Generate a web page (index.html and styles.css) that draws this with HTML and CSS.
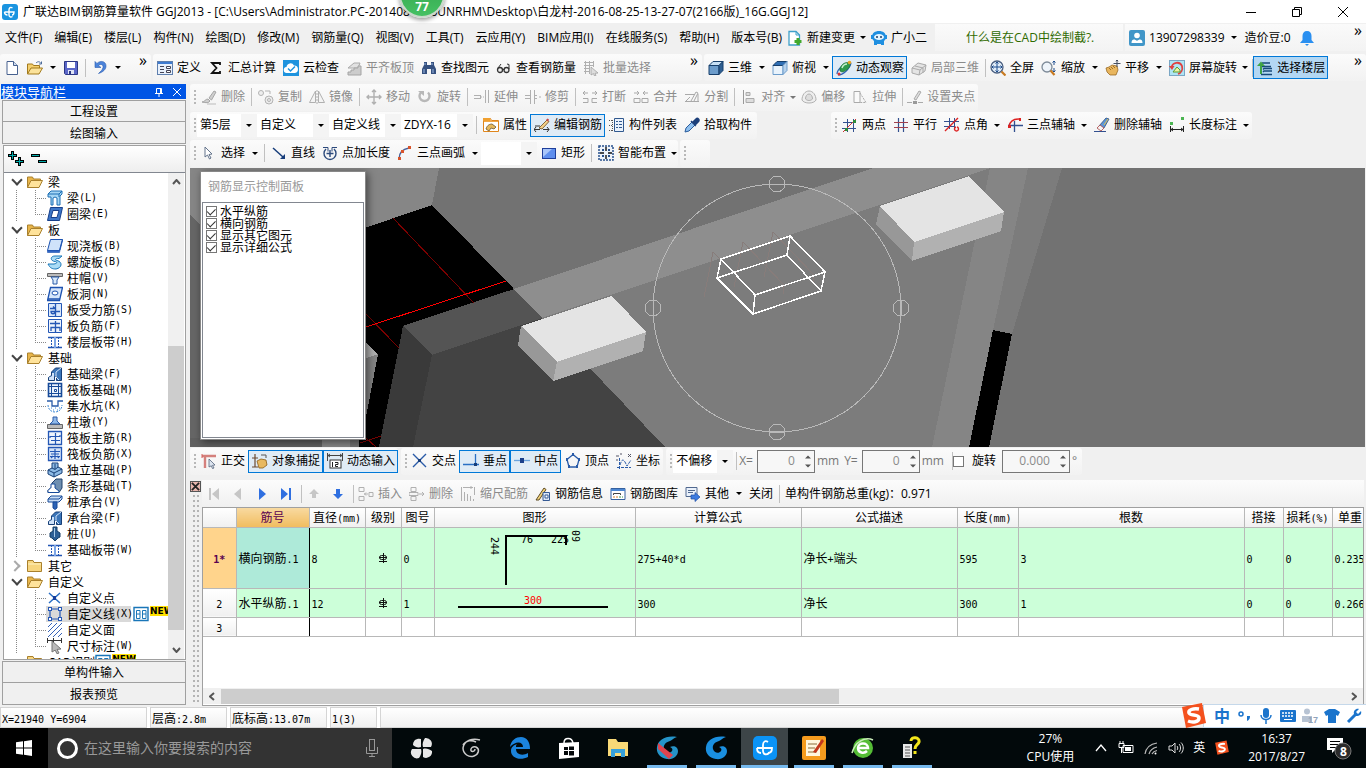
FILE: index.html
```html
<!DOCTYPE html>
<html lang="zh-CN">
<head>
    <meta charset="UTF-8">
    <meta name="viewport" content="width=device-width, initial-scale=1.0">
    <title>广联达BIM钢筋算量软件 GGJ2013</title>
    <link rel="stylesheet" href="styles.css">
</head>
<body>
    <!-- Icon sprite -->
    <svg class="sprite" aria-hidden="true">
        <symbol id="i-logo" viewBox="0 0 16 16"><rect width="16" height="16" rx="3" fill="#1a94e0"/><path d="M10.500 4c-2-1.500-3.500 0-3.500 2v5c0 2 2 2.500 3.500 1.500M2.500 8H12c0 2-1 3-2 3M2.500 8c0 2 1 3 3 3" fill="none" stroke="#fff" stroke-width="1.400"/></symbol>
        <symbol id="i-new" viewBox="0 0 16 16"><path d="M3 1.500h6.500l4 4v9H3z" fill="#fff" stroke="#47618f"/><path d="M9.500 1.500v4h4" fill="#cfdcf0" stroke="#47618f"/></symbol>
        <symbol id="i-open" viewBox="0 0 16 16"><path d="M.5 14V4h5l1 1.500h6V8" fill="#f4cf6e" stroke="#a27a1d"/><path d="M.5 14L4 8h11.500L12 14z" fill="#fbe29a" stroke="#a27a1d"/><path d="M9 3c2-2 4-1.500 5 .5m.5-2v2.500H12" fill="none" stroke="#4a6a9a"/></symbol>
        <symbol id="i-save" viewBox="0 0 16 16"><path d="M1.500 1.500h13v13h-12l-1-1z" fill="#5b67c9" stroke="#2c3784"/><path d="M4 2h8v6H4z" fill="#fff"/><path d="M5 10h6v4H5z" fill="#dfe4f5"/><path d="M6 11h2v3H6z" fill="#2c3784"/></symbol>
        <symbol id="i-undo" viewBox="0 0 16 16"><path d="M3 1.500v6h6L6.500 5.500c2-2 5-1 4.500 2-.5 2.500-2.500 4-4.500 6C11 12 14 9.500 14 6c0-5-6-6-9-2.500z" fill="#4b83da" stroke="#2a5cae" stroke-width=".6"/></symbol>
        <symbol id="i-define" viewBox="0 0 16 16"><rect x=".5" y="1.500" width="15" height="13" fill="#e8f0fb" stroke="#5e7fae"/><path d="M1 2h14v2H1z" fill="#3f7bd0"/><path d="M3 6.500h4M3 9.500h4M3 12.500h4" stroke="#445"/><path d="M9.500 6.500h4v2h-4zM9.500 10.500h4v2h-4z" fill="#fff" stroke="#445"/></symbol>
        <symbol id="i-sigma" viewBox="0 0 16 16"><path d="M12 5V3H4l4.500 5L4 13h8v-2" fill="none" stroke="#111" stroke-width="1.800"/></symbol>
        <symbol id="i-cloud" viewBox="0 0 16 16"><rect width="16" height="16" fill="#1e93de"/><path d="M4 13a3 3 0 0 1-.5-6 4 4 0 0 1 7.500-1.500 3.800 3.800 0 0 1 1 7.500z" fill="#fff"/><path d="M5 8.500l2.500 2.500L12 6.500" fill="none" stroke="#1e93de" stroke-width="1.500"/></symbol>
        <symbol id="i-align" viewBox="0 0 16 16"><path d="M2 8l6-5 6 0-2 5z" fill="#e2e2e2" stroke="#aaa"/><path d="M2 12h3v-2h3v-2h4v-2h3v9H2z" fill="#ccc" stroke="#a4a4a4"/></symbol>
        <symbol id="i-find" viewBox="0 0 16 16"><path d="M3 2h3v3h4V2h3v3l2 4v5h-5V9H6v5H1V9l2-4z" fill="#35507f"/><path d="M3 9v4M12 9v4M4 3v2M11 3v2" stroke="#9db8e4"/></symbol>
        <symbol id="i-glasses" viewBox="0 0 16 16"><circle cx="4" cy="10" r="2.500" fill="#eee" stroke="#333" stroke-width="1.300"/><circle cx="10.500" cy="10" r="2.500" fill="#eee" stroke="#333" stroke-width="1.300"/><path d="M6.500 9.500h2M13 9V4.500l-2-.5M2 8l3-4" fill="none" stroke="#333"/></symbol>
        <symbol id="i-batch" viewBox="0 0 16 16"><path d="M1 2.500h10M1 5.500h10M1 8.500h6M1 11.500h6M2.500 1v13M6.500 1v13M10.500 1v6" stroke="#b0b0b0"/><path d="M8 7l7 6-3 .3 1 2.200-1.500.5-1-2.400L8 15z" fill="#ddd" stroke="#999" stroke-width=".7"/></symbol>
        <symbol id="i-cube" viewBox="0 0 16 16"><path d="M1 5.500h10v9H1z" fill="#6c9ccb" stroke="#173f6b"/><path d="M1 5.500l4-4h10l-4 4z" fill="#c7e0f5" stroke="#173f6b"/><path d="M11 5.500l4-4v9l-4 4z" fill="#2f5f92" stroke="#173f6b"/></symbol>
        <symbol id="i-topview" viewBox="0 0 16 16"><path d="M1 5.500h10v9H1z" fill="#e9f3fc" stroke="#6c9ccb"/><path d="M1 5.500l4-4h10l-4 4z" fill="#2f6fb5" stroke="#173f6b"/><path d="M11 5.500l4-4v9l-4 4z" fill="#b7d2ec" stroke="#6c9ccb"/></symbol>
        <symbol id="i-orbit" viewBox="0 0 16 16"><path d="M1 14c0-5 9-12 14-11M2 15c5 0 12-6 13-12" fill="none" stroke="#2d63b5" stroke-width="1.200"/><path d="M4 11c-1-5 5-10 9-8 3 3-2 8-7 9z" fill="#2f9a4d" stroke="#1b6e35" stroke-width=".7"/><path d="M6 8c1-3 3-4 5-4" fill="none" stroke="#c6f0cf" stroke-width="1.500"/><circle cx="13.500" cy="2.500" r="1.800" fill="#e6a325"/><circle cx="3" cy="14" r="1.500" fill="#d33"/></symbol>
        <symbol id="i-partial" viewBox="0 0 16 16"><path d="M1 8l6-5 8 2-1 6-6 4-7-2z" fill="#e4e4e4" stroke="#aaa"/><path d="M1 8l8 2 6-5M9 10l-1 5M4 6l8 2v5" fill="none" stroke="#aaa"/></symbol>
        <symbol id="i-full" viewBox="0 0 16 16"><circle cx="7" cy="7" r="6" fill="#e3eef9" stroke="#4a5f80" stroke-width="1.300"/><path d="M7 2v10M2 7h10M5.500 3.500L7 2l1.500 1.500M5.500 10.500L7 12l1.500-1.500M3.500 5.500L2 7l1.500 1.500M10.500 5.500L12 7l-1.500 1.500" fill="none" stroke="#1d4d8e"/><path d="M11.500 11.500l4 4" stroke="#c77a22" stroke-width="2.200"/></symbol>
        <symbol id="i-zoom" viewBox="0 0 16 16"><circle cx="6" cy="7" r="5" fill="#eef4fa" stroke="#7e8b99" stroke-width="1.300"/><path d="M9.500 10.500l4 4.500" stroke="#c77a22" stroke-width="2.200"/><path d="M13 1v4M11.500 2.500L13 1l1.500 1.500M13 12V8M11.500 10.500L13 12l1.500-1.500" fill="none" stroke="#1d4d8e"/></symbol>
        <symbol id="i-pan" viewBox="0 0 16 16"><path d="M1 8l3-1 3-2 5 1 1 4-2 5H5L2 12z" fill="#e9b65e" stroke="#8c5d17" stroke-width=".7"/><path d="M4 8l2 2m0-3l2 2m0-3l2 2" stroke="#8c5d17" stroke-width=".8"/><path d="M12 0v7M8.500 3.500h7M10.800 1.200L12 0l1.200 1.200" fill="none" stroke="#454f60"/></symbol>
        <symbol id="i-rotate" viewBox="0 0 16 16"><rect x=".5" y=".5" width="15" height="15" fill="#aee4f4" stroke="#7aa6c4"/><path d="M2.500 8C3 2 11 1 13 6c1 4-1 7-4 8" fill="none" stroke="#e04040" stroke-width="1.800"/><path d="M0 6h5.500L3 10z" fill="#e04040"/><path d="M4 12l4-5 3 3v2z" fill="#ecf3a2" stroke="#5b9b33"/></symbol>
        <symbol id="i-floors" viewBox="0 0 16 16"><path d="M5 3h8M5 6.500h9M6 9.500l1-1h8M6 12l1-1h8M4 14.500h11" fill="none" stroke="#174a7a" stroke-width="1.400"/><path d="M0 6l4-4.500L8 6H5v8H3V6z" fill="#3ea346"/></symbol>

        <symbol id="i-brush" viewBox="0 0 16 16"><path d="M1 13c3 0 3-3 6-3l2 2c-1 2-4 2-8 1zM8 9l5-7 2 1-4.500 8z" fill="#cfcfcf" stroke="#a6a6a6"/><path d="M6 15h9" stroke="#bbb"/></symbol>
        <symbol id="i-copy" viewBox="0 0 16 16"><circle cx="3" cy="4" r="2.500" fill="#eee" stroke="#b3b3b3"/><circle cx="11" cy="11" r="4" fill="#ececec" stroke="#b3b3b3"/><circle cx="11" cy="11" r="1.500" fill="none" stroke="#b3b3b3"/><path d="M7 2h5v3" fill="none" stroke="#b3b3b3"/></symbol>
        <symbol id="i-mirror" viewBox="0 0 16 16"><path d="M6.500 2v11.500h-6zM9.500 2v11.500h6z" fill="#f4f4f4" stroke="#b0b0b0"/><path d="M8 1v14" stroke="#b0b0b0" stroke-dasharray="2 1"/></symbol>
        <symbol id="i-move" viewBox="0 0 16 16"><path d="M8 1v14M1 8h14M6 3l2-2 2 2M6 13l2 2 2-2M3 6L1 8l2 2M13 6l2 2-2 2" fill="none" stroke="#b0b0b0" stroke-width="1.400"/></symbol>
        <symbol id="i-turn" viewBox="0 0 16 16"><path d="M4 3.500a5 5 0 1 0 7 0" fill="none" stroke="#b8b8b8" stroke-width="2.400"/><path d="M1 2h6v5z" fill="#b8b8b8"/></symbol>
        <symbol id="i-extend" viewBox="0 0 16 16"><path d="M0 6.500h6M0 9.500h6M6.500 6v4M11.500 1v13M14.500 1v13" stroke="#b0b0b0"/><path d="M7 8h4" stroke="#b0b0b0" stroke-dasharray="1 1"/></symbol>
        <symbol id="i-trim" viewBox="0 0 16 16"><path d="M5.500 1v14M9.500 1v14M0 6.500h5M0 9.500h5M10 6.500h2M10 9.500h2M14 8h2" stroke="#b0b0b0"/></symbol>
        <symbol id="i-break" viewBox="0 0 16 16"><path d="M1 4h5M3 2L1 4l2 2M10 4h5M13 2l2 2-2 2M1 9.500h5v4H1M15 9.500h-5v4h5" fill="none" stroke="#a9a9a9"/></symbol>
        <symbol id="i-join" viewBox="0 0 16 16"><path d="M1 4h5M4 2l2 2-2 2M10 4h5M12 2l-2 2 2 2M1 9.500h6v4H1zM9 9.500h6v4H9z" fill="none" stroke="#a9a9a9"/></symbol>
        <symbol id="i-split" viewBox="0 0 16 16"><path d="M1 5.500h10M1 12.500h14M2 12l4-4M7 12l5-9 2 1-4 8M14 5v7" fill="none" stroke="#a9a9a9"/></symbol>
        <symbol id="i-justify" viewBox="0 0 16 16"><path d="M2.500 1v14" stroke="#999"/><path d="M5 3.500h4v3H5zM5 9.500h8v4H5z" fill="#ddd" stroke="#aaa"/></symbol>
        <symbol id="i-offset" viewBox="0 0 16 16"><path d="M1 11c0-5 3-9 7-9s7 4 7 9c-2 4-12 4-14 0z" fill="#eee" stroke="#b0b0b0"/><path d="M4.500 10c0-3 1.500-5 3.500-5s3.500 2 3.500 5c-2 2-5 2-7 0z" fill="#ddd" stroke="#b0b0b0"/></symbol>
        <symbol id="i-stretch" viewBox="0 0 16 16"><path d="M2 2.500h6v11H2z" fill="#fafafa" stroke="#aaa"/><path d="M8 4l6 9.500H8" fill="none" stroke="#aaa" stroke-dasharray="2 1"/></symbol>
        <symbol id="i-grippt" viewBox="0 0 16 16"><path d="M0 13.500h5M11 13.500h5" stroke="#aaa"/><path d="M6 12h4v3H6z" fill="#999"/><path d="M7 10l5-8 2 1-5 8z" fill="#ddd" stroke="#aaa"/></symbol>

        <symbol id="i-props" viewBox="0 0 16 16"><path d="M.5 1.500h7l1 2h7v11H.5z" fill="#fff" stroke="#e0861c"/><path d="M0 1h7l1 3H0z" fill="#f0a030"/><path d="M1 4.500h14" stroke="#f0a848"/><path d="M3 12c1-4 4-5 6-5l4 3-2 2-3-1-2 3z" fill="#e5b85b" stroke="#6b5530" stroke-width=".8"/></symbol>
        <symbol id="i-editbar" viewBox="0 0 16 16"><path d="M0 12.500h6M9 12.500h6M2 10L0 12.500 2 15M13 10l2 2.500-2 2.500" fill="none" stroke="#333"/><path d="M5 11l8-8 2 1.500L8 12z" fill="#f5d188" stroke="#6a4a1c" stroke-width=".8"/><path d="M1 9h5" fill="none" stroke="#333"/><path d="M12 3l2 1.500 1-2-1.500-1z" fill="#c44"/></symbol>
        <symbol id="i-list" viewBox="0 0 16 16"><path d="M0 3.500h3M0 8.500h3M0 13.500h3M3.500 3v11" stroke="#555" stroke-dasharray="1 1"/><path d="M5.500 1.500h9v13h-9z" fill="#eaf2fc" stroke="#31598f"/><path d="M7 4.500h2M10 4.500h3M7 7.500h2M10 7.500h3M7 10.500h2M10 10.500h3" stroke="#31598f"/></symbol>
        <symbol id="i-pick" viewBox="0 0 16 16"><path d="M1 15l1-4 6-6 3 3-6 6z" fill="#8fc0ef" stroke="#2a5c9c"/><path d="M7 4l5 5M9 5l3-3a1.500 1.500 0 0 1 2.500 2.500L11 8z" fill="#1c3f7a" stroke="#1c3f7a" stroke-width="1.500"/></symbol>
        <symbol id="i-axis2" viewBox="0 0 16 16"><path d="M5.500 2v13M11.500 2v13M1 5.500h13M0 11.500h14" stroke="#33508f"/><path d="M1 15L14 2" stroke="#c33"/><path d="M3 11h3v3H3zM11 3h3v3h-3z" fill="#2e8a3b"/></symbol>
        <symbol id="i-axisp" viewBox="0 0 16 16"><path d="M5.500 1v14M10.500 1v14" stroke="#33508f" stroke-width="1.200"/><path d="M1 5.500h14M1 10.500h14" stroke="#a0404c" stroke-width="1.200"/></symbol>
        <symbol id="i-axisa" viewBox="0 0 16 16"><path d="M5.500 1v11M10.500 1v11M0 4.500h15M0 9.500h10" stroke="#33508f"/><path d="M1 14L14 1M12 10a2 2 0 1 0 1 0" fill="none" stroke="#d22" stroke-width="1.400"/></symbol>
        <symbol id="i-axis3" viewBox="0 0 16 16"><path d="M2 9c1-4 4-7 10-7" fill="none" stroke="#d22" stroke-width="1.400"/><path d="M7.500 4v11M1 8.500h15" stroke="#33508f" stroke-width="1.300"/><path d="M1 8h3v3H1zM12 1h2v3h-2z" fill="#d22"/></symbol>
        <symbol id="i-axisdel" viewBox="0 0 16 16"><path d="M5 9l7-8 3 1-5 9z" fill="#5d97d8" stroke="#2b4e80" stroke-width=".8"/><path d="M3 11l3-3 4 3-3 3z" fill="#f3f3f3" stroke="#a44" stroke-width=".8"/><path d="M0 14.500h12" stroke="#33508f"/><path d="M10 8l4-6" stroke="#e6c04c"/></symbol>
        <symbol id="i-dim" viewBox="0 0 16 16"><path d="M1 5h3v3H1zM12 0h3v3h-3z" fill="#4bb552"/><path d="M1.500 9v6M14.500 9v6M2 12.500h12M4 11l-2 1.500L4 14M12 11l2 1.500-2 1.500" fill="none" stroke="#222"/></symbol>

        <symbol id="i-pointer" viewBox="0 0 16 16"><path d="M4 2v10l2.500-2 2 4 1.500-1-2-3.500 3-.5z" fill="#fff" stroke="#64748c"/></symbol>
        <symbol id="i-line" viewBox="0 0 16 16"><path d="M2 3l10 9" stroke="#173d7a" stroke-width="1.500"/><path d="M14 14H9l5-5z" fill="#173d7a"/></symbol>
        <symbol id="i-ptlen" viewBox="0 0 16 16"><path d="M4 4a6 6 0 1 0 8 0M8 5v7M4.500 8.500h7" fill="none" stroke="#2c4a7c" stroke-width="1.400"/><path d="M1 2.500h5v4M15 2.500h-5v4" fill="none" stroke="#2c4a7c"/></symbol>
        <symbol id="i-arc" viewBox="0 0 16 16"><path d="M2 14c0-6 4-10 10-11" fill="none" stroke="#47609a" stroke-width="1.300"/><path d="M1 12h3v3H1zM4 5h3v3H4zM11 1h3v3h-3z" fill="#d9542b"/></symbol>
        <symbol id="i-rect" viewBox="0 0 16 16"><rect x="1.500" y="3.500" width="13" height="10" fill="#5f8fee" stroke="#1f3f9b"/><path d="M2 4h9l-9 8z" fill="#a9c6fa"/></symbol>
        <symbol id="i-smart" viewBox="0 0 16 16"><rect x="1" y="1" width="14" height="14" fill="#eef3fa" stroke="#27508c" stroke-width="1.500" stroke-dasharray="2 1"/><path d="M8 2v4M8 10v4M2 8h4M10 8h4" stroke="#111" stroke-width="1.400"/><path d="M4 4h2v2H4zM10 4h2v2h-2zM4 10h2v2H4zM10 10h2v2h-2z" fill="#27508c"/></symbol>

        <symbol id="i-ortho" viewBox="0 0 16 16"><path d="M1 3h14M4 3v12" stroke="#d4807c" stroke-width="2.400"/><path d="M1 1v4" stroke="#d4605c"/><path d="M8 6l6 6-2.500.3L13 15l-1.500.6-1.200-2.800L8 14z" fill="#dce4ef" stroke="#55657c" stroke-width=".8"/></symbol>
        <symbol id="i-snap" viewBox="0 0 16 16"><path d="M0 5h6M3 1v13M0 14h6" stroke="#6c4a30" stroke-width="1.200"/><path d="M5 8l4-2 5 1 1 5-4 3H7z" fill="#e8b961" stroke="#8c5d17" stroke-width=".8"/><path d="M9 2h5v3" fill="none" stroke="#555"/></symbol>
        <symbol id="i-dyn" viewBox="0 0 16 16"><path d="M0 2.500h16M.5 0v8M15.500 0v8M3 1L1 2.500 3 4M13 1l2 1.500L13 4" fill="none" stroke="#444"/><rect x="3" y="7" width="11" height="8" fill="#fff" stroke="#333"/><path d="M5.500 9v5M8 9.500h3v2H8.500v2H11" fill="none" stroke="#222"/></symbol>
        <symbol id="i-cross" viewBox="0 0 16 16"><path d="M1 1l13 13M14 1L1 14" stroke="#2a5ba8" stroke-width="1.400"/><path d="M6 6h3v3H6z" fill="#173d7a"/></symbol>
        <symbol id="i-perp" viewBox="0 0 16 16"><path d="M0 11.500h16M12.500 1v12" stroke="#2a6fc4" stroke-width="1.300"/><path d="M11 10h3v3h-3z" fill="#173d7a"/></symbol>
        <symbol id="i-mid" viewBox="0 0 16 16"><path d="M0 7.500h16" stroke="#6ba3dd" stroke-width="1.300"/><path d="M6 5h4v5H6z" fill="#1a3f8a"/></symbol>
        <symbol id="i-vertex" viewBox="0 0 16 16"><path d="M8 1.500l6 5L12 14H4L2 6.500z" fill="none" stroke="#2a5ba8" stroke-width="1.300"/><path d="M7 0h2v3H7zM1 5h2v3H1zM13 5h2v3h-2zM3 12h2v3H3zM11 12h2v3h-2z" fill="#2a5ba8"/></symbol>
        <symbol id="i-coord" viewBox="0 0 16 16"><path d="M1 14.500h14M3.500 5v11M4 12c2-6 3-6 5-3l2 4 4-6" fill="none" stroke="#2a5ba8" stroke-dasharray="3 1"/><path d="M0 3h3M0 7h2M12 1l3 3M15 1l-3 3M4 1h2" stroke="#556"/></symbol>

        <symbol id="i-first" viewBox="0 0 16 16"><path d="M3 2h2v12H3zM13 2v12L6 8z" fill="#c6c6c6"/></symbol>
        <symbol id="i-prev" viewBox="0 0 16 16"><path d="M11 2v12L4 8z" fill="#c6c6c6"/></symbol>
        <symbol id="i-next" viewBox="0 0 16 16"><path d="M5 2v12l7-6z" fill="#2f6fe0"/></symbol>
        <symbol id="i-last" viewBox="0 0 16 16"><path d="M3 2v12l7-6zM11 2h2v12h-2z" fill="#2f6fe0"/></symbol>
        <symbol id="i-up" viewBox="0 0 16 16"><path d="M8 3l5 5h-3v4H6V8H3z" fill="#c6c6c6"/></symbol>
        <symbol id="i-down" viewBox="0 0 16 16"><path d="M8 13L3 8h3V3h4v5h3z" fill="#2f6fe0"/></symbol>
        <symbol id="i-insert" viewBox="0 0 16 16"><path d="M1 1.500h5v4H1zM1 10.500h5v4H1zM11 6.500h4v4h-4zM6 8h4M8 6.500L6.500 8 8 9.500" fill="none" stroke="#b0b0b0"/></symbol>
        <symbol id="i-remove" viewBox="0 0 16 16"><path d="M2 1.500h5v4H2zM0 6.500h9v3H0zM2 10.500h5v4H2zM10 8h5M13 6l2 2-2 2" fill="none" stroke="#b0b0b0"/></symbol>
        <symbol id="i-scale" viewBox="0 0 16 16"><path d="M1.500 1v14M4.500 6v9M7.500 8v7M10.500 10v5M13.500 13v2M3 1.500h10M11 0v3M14.500 1v8" stroke="#b0b0b0"/></symbol>
        <symbol id="i-info" viewBox="0 0 16 16"><path d="M1 14L9 2l2 1.500L4 14z" fill="#f3d37c" stroke="#5d4a22"/><path d="M8 6.500h6.500v8H8z" fill="#dde8f7" stroke="#355a94"/><path d="M10 9h3v3h-3z" fill="#fff" stroke="#355a94"/></symbol>
        <symbol id="i-lib" viewBox="0 0 16 16"><path d="M1 2.500h14v11H1z" fill="#fff" stroke="#35619f"/><path d="M1 3h14v2H1z" fill="#4b86d2"/><path d="M3.500 9V7.500h7V9" fill="none" stroke="#444"/><path d="M3 11h2M6 11h2" stroke="#d8812c"/><path d="M9 11h2M12 11h1" stroke="#3a9c48"/></symbol>
        <symbol id="i-other" viewBox="0 0 16 16"><path d="M1 1.500h11v9H1z" fill="#eaf1fb" stroke="#50688f"/><path d="M3 4.500h7M3 6.500h5" stroke="#50688f"/><path d="M6 9h4V6.500l5 4.500-5 4.500V13H6z" fill="#3c7be0" stroke="#1d4da5" stroke-width=".7"/></symbol>

        <symbol id="i-change" viewBox="0 0 16 16"><path d="M2 1.500h7l3.500 3.500v10H2z" fill="#fff" stroke="#3fa0c9" stroke-width="1.300"/><path d="M9 1.500V5h3.500" fill="none" stroke="#3fa0c9"/><path d="M11 8v7M7.500 11.500h7" stroke="#42a92c" stroke-width="3"/></symbol>
        <symbol id="i-mascot" viewBox="0 0 16 16"><path d="M1 7c0-4 3-6 7-6s7 2 7 6c0 2-1 3-2 4v4h-3v-1H6v1H3v-4C2 10 1 9 1 7z" fill="#1f8fe0"/><path d="M0 5h3v4H0zM13 5h3v4h-3z" fill="#1f8fe0"/><ellipse cx="8" cy="7" rx="5" ry="3" fill="#e4f4ff"/><circle cx="6" cy="7" r="1" fill="#1d3f66"/><circle cx="10" cy="7" r="1" fill="#1d3f66"/></symbol>
        <symbol id="i-user" viewBox="0 0 16 16"><rect width="16" height="16" rx="2" fill="#4196c8"/><circle cx="8" cy="5.500" r="2.800" fill="#fff"/><path d="M2.500 13c0-4 3-4.500 5.500-2 2.500-2.500 5.500-2 5.500 2z" fill="#fff"/></symbol>
        <symbol id="i-bell" viewBox="0 0 16 16"><path d="M8 1c3 0 4.500 2 4.500 5v4L15 13H1l2.500-3V6C3.500 3 5 1 8 1z" fill="#2a8ff0"/><path d="M6 14h4l-2 2z" fill="#2a8ff0"/></symbol>

        <symbol id="i-folder" viewBox="0 0 16 16"><path d="M.5 13.500V3h5l1 2h7v2.500" fill="#e8b54a" stroke="#a9802c"/><path d="M.5 13.500L4 6.500h11.500L12 13.500z" fill="#ffe39b" stroke="#a9802c"/></symbol>
        <symbol id="i-folderc" viewBox="0 0 16 16"><path d="M.5 13.500V2.500h5.500l1 2h7.500v9z" fill="#f7d57e" stroke="#a9802c"/><path d="M1 6h13" stroke="#fff3c4"/></symbol>
        <symbol id="t-beam" viewBox="0 0 16 16"><path d="M1 4l3-3h11v3l-2 2v9h-3V8L8 7l-2 1v7H4V7H1z" fill="#a4d6f5" stroke="#1c6fb4"/><path d="M1 4h11l3-3M12 4v3" fill="none" stroke="#1c6fb4"/></symbol>
        <symbol id="t-ring" viewBox="0 0 16 16"><path d="M3.500 1.500h12l-3 13H.5z" fill="#3c76c8" stroke="#173f8a"/><path d="M6 4.500h6l-2 7H4z" fill="#fff" stroke="#173f8a"/></symbol>
        <symbol id="t-slab" viewBox="0 0 16 16"><path d="M3.500 1.500h12l-3 11H.5z" fill="#cfe2fa" stroke="#1c52b0"/><path d="M.5 12.500v2h12l3-12v-1l-3 11z" fill="#2f65c4" stroke="#1c52b0" stroke-width=".6"/></symbol>
        <symbol id="t-spiral" viewBox="0 0 16 16"><path d="M15 2H8C3 2 3 7 8 7.500c3 .5 2 2-1 2.500H1c2 4 4 5 8 5 6-1 7-7 1-8.500C7 6 9 4 12 4.500z" fill="#aadcf6" stroke="#1976b8"/></symbol>
        <symbol id="t-cap" viewBox="0 0 16 16"><path d="M.5 3.500h15v3H.5z" fill="#bbb" stroke="#666"/><path d="M4 7h8l-2 3v4H6v-4z" fill="#d9eafb" stroke="#2a5ba8"/></symbol>
        <symbol id="t-hole" viewBox="0 0 16 16"><path d="M3.500 1.500h12l-3 13H.5z" fill="#d6e6fb" stroke="#1c52b0" stroke-width="1.300"/><ellipse cx="8" cy="7" rx="3" ry="2" fill="#fff" stroke="#1c52b0"/><path d="M1 13h12" stroke="#1c52b0" stroke-width="1.500"/></symbol>
        <symbol id="t-stress" viewBox="0 0 16 16"><path d="M1.500 1.500h13v13h-13z" fill="#dbe8fb" stroke="#2457b5"/><path d="M3 6.500h5l-2-2M8.500 2v12M13 9.500H4c0 3 4 3 4 0" fill="none" stroke="#2457b5" stroke-width="1.300"/></symbol>
        <symbol id="t-neg" viewBox="0 0 16 16"><path d="M1.500 1.500h13v13h-13z" fill="#eef4fd" stroke="#2457b5"/><path d="M3 5.500h10M4 13V9.500h9V13M8.500 3v11" fill="none" stroke="#2457b5" stroke-width="1.300"/></symbol>
        <symbol id="t-strip" viewBox="0 0 16 16"><path d="M1 3.500h14M1 13.500h14" stroke="#2457b5" stroke-width="1.600"/><path d="M4.500 3v11M11.500 3v11" stroke="#2457b5" stroke-dasharray="2 1"/><path d="M8 3v11" stroke="#7da6e6" stroke-width="2"/></symbol>
        <symbol id="t-fbeam" viewBox="0 0 16 16"><path d="M1.500 14.500v-3l3-2V6l4-4h6v12.500h-5v-4h-2v4z" fill="#3a75b8" stroke="#173f77"/><path d="M2 14v-2.500L5 10V7h2v7z" fill="#cfe2f8"/><path d="M9 6l5-4M9 6v5l3 3" fill="none" stroke="#cfe2f8"/></symbol>
        <symbol id="t-raft" viewBox="0 0 16 16"><path d="M1.500 1.500h13v13h-13z" fill="#eaf2fd" stroke="#174a99" stroke-width="1.600"/><path d="M4.500 1v14M11.500 1v14M1 4.500h14M1 11.500h14" stroke="#174a99"/><path d="M7.500 7.500h2v2h-2z" fill="#fff" stroke="#174a99"/></symbol>
        <symbol id="t-pit" viewBox="0 0 16 16"><path d="M0 3h5v5h6V3h5" fill="none" stroke="#2a5ba8" stroke-width="1.300"/><path d="M1 7c0 4 3 7 7 7s7-3 7-7M4 10h1M8 10h1M12 10h1M6 12h1M10 12h1" fill="none" stroke="#3f8ad6" stroke-dasharray="2 1"/></symbol>
        <symbol id="t-pier" viewBox="0 0 16 16"><path d="M.5 10.500h15v4H.5z" fill="#bbb" stroke="#666"/><path d="M3 10l3-3V3h4v4l3 3z" fill="#8fb9ea" stroke="#2a5ba8"/></symbol>
        <symbol id="t-main" viewBox="0 0 16 16"><path d="M1.500 1.500h13v13h-13z" fill="#eef4fd" stroke="#2457b5" stroke-width="1.300"/><path d="M3 8V6.500h10V5M8.500 3v11M4 10.500h9" fill="none" stroke="#2457b5" stroke-width="1.200"/></symbol>
        <symbol id="t-raftneg" viewBox="0 0 16 16"><path d="M1.500 1.500h13v13h-13z" fill="#d3e2f8" stroke="#2457b5" stroke-width="1.300"/><path d="M3 5.500h10M3 10.500h10M8 3v10M4 8h8M4 12l2-2M12 12l-2-2" fill="none" stroke="#2457b5" stroke-width="1.200"/></symbol>
        <symbol id="t-iso" viewBox="0 0 16 16"><path d="M1 8l4-2V1h6v4l4 2v4l-8 4-6-3z" fill="#8dbbe6" stroke="#173f77"/><path d="M1 8l6 3 8-4M7 11v4M5 6l3 1.500L11 5M8 2v5" fill="none" stroke="#173f77"/></symbol>
        <symbol id="t-foot" viewBox="0 0 16 16"><path d="M1 14.500v-2l4-4V5l4-4h6v9l-3 4.500z" fill="#6f8fb0" stroke="#21406b"/><path d="M1 14.500v-2l3-3V6h4v4l4 3v1.500z" fill="#fff" stroke="#174a99"/></symbol>
        <symbol id="t-pcap" viewBox="0 0 16 16"><path d="M1 5l3-3h11v3l-3 3H1z" fill="#c8dcf4" stroke="#174a99"/><path d="M1 5h11l3-3" fill="none" stroke="#174a99"/><path d="M6 8h4v6l-2 1.500L6 14z" fill="#2d63b5" stroke="#174a99"/></symbol>
        <symbol id="t-pile" viewBox="0 0 16 16"><path d="M6 1h4v4l3 2v4l-2 1-3 3-3-3-2-1V7l3-2z" fill="#2d5f95" stroke="#173f66"/><path d="M7.500 2v9" stroke="#a9cbe8"/></symbol>
        <symbol id="t-point" viewBox="0 0 16 16"><path d="M2 3l11 10M13 3L2 13" stroke="#2a6fc4" stroke-width="1.500"/><path d="M6 6h3v4H6z" fill="#173d9a"/></symbol>
        <symbol id="t-cline" viewBox="0 0 16 16"><path d="M3 3h10v10H3z" fill="none" stroke="#2457b5" stroke-width="1.200"/><path d="M1 1h4v4H1zM11 1h4v4h-4zM1 11h4v4H1zM11 11h4v4h-4z" fill="#2457b5"/><path d="M2 2h2v2H2zM12 2h2v2h-2zM2 12h2v2H2zM12 12h2v2h-2z" fill="#fff"/></symbol>
        <symbol id="t-hatch" viewBox="0 0 16 16"><path d="M1 5l4-4M1 10l9-9M1 15L15 1M6 15l9-9M11 15l4-4" stroke="#3763b8"/></symbol>
        <symbol id="t-dim" viewBox="0 0 16 16"><path d="M.5 0v5M6.500 0v5M14.500 0v5M0 2.500h15" stroke="#333"/><path d="M5 3l9 8-4 .4 2 3.600-2 .8-1.800-3.700L5 14z" fill="#bbb" stroke="#777"/></symbol>
        <symbol id="t-table" viewBox="0 0 16 16"><path d="M1 1.500h14v13H1z" fill="#fff" stroke="#1976b8" stroke-width="1.400"/><path d="M3.500 4.500h3.500v8H3.500zM9.500 4.500H13v8H9.500zM3.500 8h3.500M9.500 8H13" fill="none" stroke="#1976b8"/></symbol>
        <symbol id="i-rebar" viewBox="0 0 12 12"><rect x="2.500" y="3.500" width="7" height="4" rx="2" fill="none" stroke="#111"/><path d="M6.500 1v10M2 5.500h8M2 9.500h8" stroke="#111"/></symbol>
        <symbol id="i-sogou" viewBox="0 0 28 28"><path d="M2 5l20-4 4 20L6 26z" fill="#f4511e"/><path d="M19 7c-6-1-11 1-10 4s10 1 10 5-6 5-11 3" fill="none" stroke="#fff" stroke-width="3.500"/></symbol>
    </svg>

    <!-- Title bar -->
    <header class="titlebar">
        <svg class="ico"><use href="#i-logo"/></svg>
        <span class="title">广联达BIM钢筋算量软件 GGJ2013 - [C:\Users\Administrator.PC-2014081116UNRHM\Desktop\白龙村-2016-08-25-13-27-07(2166版)_16G.GGJ12]</span>
        <div class="winbtns">
            <button aria-label="最小化"><svg viewBox="0 0 12 12"><path d="M1 6.500h10" stroke="#000"/></svg></button>
            <button aria-label="还原"><svg viewBox="0 0 12 12"><path d="M1.500 3.500h7v7h-7zM3.500 3V1.500h7v7H9" fill="none" stroke="#000"/></svg></button>
            <button aria-label="关闭"><svg viewBox="0 0 12 12"><path d="M1 1l10 10M11 1L1 11" stroke="#000"/></svg></button>
        </div>
    </header>
    <div class="speedball">77</div>

    <!-- Menu bar -->
    <nav class="menubar">
        <div class="menus">
            <button>文件(F)</button><button>编辑(E)</button><button>楼层(L)</button><button>构件(N)</button><button>绘图(D)</button><button>修改(M)</button><button>钢筋量(Q)</button><button>视图(V)</button><button>工具(T)</button><button>云应用(Y)</button><button>BIM应用(I)</button><button>在线服务(S)</button><button>帮助(H)</button><button>版本号(B)</button>
        </div>
        <button class="tool"><svg class="ico"><use href="#i-change"/></svg>新建变更</button><button class="drop small" aria-label="更多"></button>
        <button class="tool"><svg class="ico"><use href="#i-mascot"/></svg>广小二</button>
        <a class="tip" href="#">什么是在CAD中绘制截?.</a>
        <div class="account">
            <button class="tool"><svg class="ico"><use href="#i-user"/></svg>13907298339</button><button class="drop" aria-label="账号"></button>
            <span class="beans">造价豆:0</span>
            <button class="bell" aria-label="消息"><svg class="ico"><use href="#i-bell"/></svg></button>
            <button class="more">»</button>
        </div>
    </nav>

    <!-- Main toolbar -->
    <div class="toolrow main-tools">
        <div class="strip file-tools">
            <button class="tool"><svg class="ico"><use href="#i-new"/></svg></button>
            <button class="tool"><svg class="ico"><use href="#i-open"/></svg></button><button class="drop" aria-label="打开"></button>
            <button class="tool"><svg class="ico"><use href="#i-save"/></svg></button><span class="sep"></span>
            <button class="tool"><svg class="ico"><use href="#i-undo"/></svg></button><button class="drop" aria-label="撤销"></button>
            <button class="more">»</button>
        </div>
        <div class="strip calc-tools">
            <button class="tool"><svg class="ico"><use href="#i-define"/></svg>定义</button>
            <button class="tool"><svg class="ico"><use href="#i-sigma"/></svg>汇总计算</button>
            <button class="tool"><svg class="ico"><use href="#i-cloud"/></svg>云检查</button>
            <button class="tool off"><svg class="ico"><use href="#i-align"/></svg>平齐板顶</button>
            <button class="tool"><svg class="ico"><use href="#i-find"/></svg>查找图元</button>
            <button class="tool"><svg class="ico"><use href="#i-glasses"/></svg>查看钢筋量</button>
            <button class="tool off"><svg class="ico"><use href="#i-batch"/></svg>批量选择</button>
            <button class="more">»</button>
        </div>
        <div class="strip view-tools">
            <button class="tool"><svg class="ico"><use href="#i-cube"/></svg>三维</button><button class="drop" aria-label="三维"></button>
            <button class="tool"><svg class="ico"><use href="#i-topview"/></svg>俯视</button><button class="drop" aria-label="俯视"></button>
            <button class="tool on"><svg class="ico"><use href="#i-orbit"/></svg>动态观察</button>
            <button class="tool off"><svg class="ico"><use href="#i-partial"/></svg>局部三维</button><span class="sep slim"></span>
            <button class="tool"><svg class="ico"><use href="#i-full"/></svg>全屏</button>
            <button class="tool"><svg class="ico"><use href="#i-zoom"/></svg>缩放</button><button class="drop" aria-label="缩放"></button>
            <button class="tool"><svg class="ico"><use href="#i-pan"/></svg>平移</button><button class="drop" aria-label="平移"></button>
            <button class="tool"><svg class="ico"><use href="#i-rotate"/></svg>屏幕旋转</button><button class="drop small" aria-label="屏幕旋转"></button><span class="sep slim"></span>
            <button class="tool on deep"><svg class="ico"><use href="#i-floors"/></svg>选择楼层</button>
            <button class="more">»</button>
        </div>
    </div>

    <div class="workspace">
        <!-- Module navigation -->
        <aside class="sidebar">
            <div class="side-title"><span>模块导航栏</span>
                <svg viewBox="0 0 10 10"><path d="M2.500 6V1.500h5V6M1 6.500h8M5 7v3M6.500 2v4" fill="none" stroke="#fff"/></svg>
                <svg viewBox="0 0 10 10"><path d="M1 1l8 8M9 1L1 9" stroke="#fff"/></svg>
            </div>
            <button class="module">工程设置</button>
            <button class="module">绘图输入</button>
            <div class="tree-box">
                <div class="tree-tools">
                    <svg viewBox="0 0 40 16"><path d="M4.500 0v9M0 4.500h9M11.500 6v9M7 10.500h9M23 4.500h9M30 10.500h9" fill="none" stroke="#000" stroke-width="3"/><path d="M4.500 1v7M1 4.500h7M11.500 7v7M8 10.500h7M24 4.500h7M31 10.500h7" fill="none" stroke="#0aa"/></svg>
                </div>
                <div class="tree-view">
                    <ul class="tree">
                        <li><div class="branch"><i class="open"></i><svg class="ico"><use href="#i-folder"/></svg>梁</div>
                            <ul class="leaves">
                                <li><svg class="ico"><use href="#t-beam"/></svg>梁<span class="en">(L)</span></li>
                                <li><svg class="ico"><use href="#t-ring"/></svg>圈梁<span class="en">(E)</span></li>
                            </ul></li>
                        <li><div class="branch"><i class="open"></i><svg class="ico"><use href="#i-folder"/></svg>板</div>
                            <ul class="leaves">
                                <li><svg class="ico"><use href="#t-slab"/></svg>现浇板<span class="en">(B)</span></li>
                                <li><svg class="ico"><use href="#t-spiral"/></svg>螺旋板<span class="en">(B)</span></li>
                                <li><svg class="ico"><use href="#t-cap"/></svg>柱帽<span class="en">(V)</span></li>
                                <li><svg class="ico"><use href="#t-hole"/></svg>板洞<span class="en">(N)</span></li>
                                <li><svg class="ico"><use href="#t-stress"/></svg>板受力筋<span class="en">(S)</span></li>
                                <li><svg class="ico"><use href="#t-neg"/></svg>板负筋<span class="en">(F)</span></li>
                                <li><svg class="ico"><use href="#t-strip"/></svg>楼层板带<span class="en">(H)</span></li>
                            </ul></li>
                        <li><div class="branch"><i class="open"></i><svg class="ico"><use href="#i-folder"/></svg>基础</div>
                            <ul class="leaves">
                                <li><svg class="ico"><use href="#t-fbeam"/></svg>基础梁<span class="en">(F)</span></li>
                                <li><svg class="ico"><use href="#t-raft"/></svg>筏板基础<span class="en">(M)</span></li>
                                <li><svg class="ico"><use href="#t-pit"/></svg>集水坑<span class="en">(K)</span></li>
                                <li><svg class="ico"><use href="#t-pier"/></svg>柱墩<span class="en">(Y)</span></li>
                                <li><svg class="ico"><use href="#t-main"/></svg>筏板主筋<span class="en">(R)</span></li>
                                <li><svg class="ico"><use href="#t-raftneg"/></svg>筏板负筋<span class="en">(X)</span></li>
                                <li><svg class="ico"><use href="#t-iso"/></svg>独立基础<span class="en">(P)</span></li>
                                <li><svg class="ico"><use href="#t-foot"/></svg>条形基础<span class="en">(T)</span></li>
                                <li><svg class="ico"><use href="#t-pcap"/></svg>桩承台<span class="en">(V)</span></li>
                                <li><svg class="ico"><use href="#t-fbeam"/></svg>承台梁<span class="en">(F)</span></li>
                                <li><svg class="ico"><use href="#t-pile"/></svg>桩<span class="en">(U)</span></li>
                                <li><svg class="ico"><use href="#t-strip"/></svg>基础板带<span class="en">(W)</span></li>
                            </ul></li>
                        <li><div class="branch"><i class="shut"></i><svg class="ico"><use href="#i-folderc"/></svg>其它</div></li>
                        <li><div class="branch"><i class="open"></i><svg class="ico"><use href="#i-folder"/></svg>自定义</div>
                            <ul class="leaves">
                                <li><svg class="ico"><use href="#t-point"/></svg>自定义点</li>
                                <li class="picked"><svg class="ico"><use href="#t-cline"/></svg>自定义线<span class="en">(X)</span><svg class="ico tail"><use href="#t-table"/></svg><b class="new">NEW</b></li>
                                <li><svg class="ico"><use href="#t-hatch"/></svg>自定义面</li>
                                <li><svg class="ico"><use href="#t-dim"/></svg>尺寸标注<span class="en">(W)</span></li>
                            </ul></li>
                        <li><div class="branch"><i></i><svg class="ico"><use href="#i-folderc"/></svg>CAD识别<svg class="ico tail"><use href="#t-table"/></svg><b class="new">NEW</b></div></li>
                    </ul>
                    <div class="vscroll"><svg viewBox="0 0 9 6"><path d="M1 5l3.500-4L8 5" fill="none" stroke="#555" stroke-width="2"/></svg><span class="vthumb"></span><svg viewBox="0 0 9 6"><path d="M1 1l3.500 4L8 1" fill="none" stroke="#555" stroke-width="2"/></svg></div>
                </div>
            </div>
            <button class="module">单构件输入</button>
            <button class="module">报表预览</button>
        </aside>

        <main class="stage">
            <!-- Edit toolbar -->
            <div class="toolrow">
                <div class="strip"><span class="grip"></span>
                    <button class="tool off"><svg class="ico"><use href="#i-brush"/></svg>删除</button><span class="sep"></span>
                    <button class="tool off"><svg class="ico"><use href="#i-copy"/></svg>复制</button>
                    <button class="tool off"><svg class="ico"><use href="#i-mirror"/></svg>镜像</button><span class="sep"></span>
                    <button class="tool off"><svg class="ico"><use href="#i-move"/></svg>移动</button>
                    <button class="tool off"><svg class="ico"><use href="#i-turn"/></svg>旋转</button><span class="sep"></span>
                    <button class="tool off"><svg class="ico"><use href="#i-extend"/></svg>延伸</button>
                    <button class="tool off"><svg class="ico"><use href="#i-trim"/></svg>修剪</button><span class="sep"></span>
                    <button class="tool off"><svg class="ico"><use href="#i-break"/></svg>打断</button>
                    <button class="tool off"><svg class="ico"><use href="#i-join"/></svg>合并</button>
                    <button class="tool off"><svg class="ico"><use href="#i-split"/></svg>分割</button><span class="sep"></span>
                    <button class="tool off"><svg class="ico"><use href="#i-justify"/></svg>对齐</button><button class="drop small off" aria-label="对齐"></button>
                    <button class="tool off"><svg class="ico"><use href="#i-offset"/></svg>偏移</button>
                    <button class="tool off"><svg class="ico"><use href="#i-stretch"/></svg>拉伸</button><span class="sep slim"></span>
                    <button class="tool off"><svg class="ico"><use href="#i-grippt"/></svg>设置夹点</button>
                </div>
            </div>

            <!-- Component and axis toolbars -->
            <div class="toolrow">
                <div class="strip component-tools"><span class="grip"></span>
                    <span class="combo narrow"><select aria-label="楼层"><option>第5层</option></select></span>
                    <span class="combo"><select aria-label="构件类别"><option>自定义</option></select></span>
                    <span class="combo"><select aria-label="构件类型"><option>自定义线</option></select></span>
                    <span class="combo"><select aria-label="构件"><option>ZDYX-16</option></select></span><span class="sep"></span>
                    <button class="tool"><svg class="ico"><use href="#i-props"/></svg>属性</button>
                    <button class="tool on"><svg class="ico"><use href="#i-editbar"/></svg>编辑钢筋</button>
                    <button class="tool"><svg class="ico"><use href="#i-list"/></svg>构件列表</button>
                    <button class="tool"><svg class="ico"><use href="#i-pick"/></svg>拾取构件</button>
                </div>
                <div class="strip axis-tools"><span class="grip"></span>
                    <button class="tool"><svg class="ico"><use href="#i-axis2"/></svg>两点</button>
                    <button class="tool"><svg class="ico"><use href="#i-axisp"/></svg>平行</button>
                    <button class="tool"><svg class="ico"><use href="#i-axisa"/></svg>点角</button><button class="drop" aria-label="点角"></button>
                    <button class="tool"><svg class="ico"><use href="#i-axis3"/></svg>三点辅轴</button><button class="drop" aria-label="三点辅轴"></button>
                    <button class="tool"><svg class="ico"><use href="#i-axisdel"/></svg>删除辅轴</button>
                    <button class="tool"><svg class="ico"><use href="#i-dim"/></svg>长度标注</button><button class="drop" aria-label="长度标注"></button>
                </div>
            </div>

            <!-- Draw toolbar -->
            <div class="toolrow">
                <div class="strip"><span class="grip"></span>
                    <button class="tool"><svg class="ico"><use href="#i-pointer"/></svg>选择</button><button class="drop" aria-label="选择"></button><span class="sep"></span>
                    <button class="tool"><svg class="ico"><use href="#i-line"/></svg>直线</button>
                    <button class="tool"><svg class="ico"><use href="#i-ptlen"/></svg>点加长度</button>
                    <button class="tool"><svg class="ico"><use href="#i-arc"/></svg>三点画弧</button><button class="drop" aria-label="三点画弧"></button>
                    <span class="combo tiny"><select aria-label="画弧方式"><option></option></select></span>
                    <button class="tool"><svg class="ico"><use href="#i-rect"/></svg>矩形</button><span class="sep"></span>
                    <button class="tool"><svg class="ico"><use href="#i-smart"/></svg>智能布置</button><button class="drop small" aria-label="智能布置"></button>
                </div>
                <div class="strip stub"><span class="grip"></span></div>
            </div>

            <!-- 3D view -->
            <div class="viewport">
                <svg class="scene" viewBox="0 0 1176 279" preserveAspectRatio="xMinYMin slice" shape-rendering="crispEdges">
                    <rect width="1176" height="279" fill="#727272"/>
                    <path d="M0 0h249l-7 37-82 28v214H0z" fill="#868686"/>
                    <path d="M0 47l10 9v223H0z" fill="#666"/>
                    <path d="M0 270h132v9H0z" fill="#606060"/>
                    <path d="M242 37l82 84-111 37-24 121h-20v-9h-9V65z" fill="#000"/>
                    <path d="M176 175l12 11-12 4z" fill="#b0b0b0"/>
                    <path d="M176 190l12-4-12 63z" fill="#848484"/>
                    <path d="M213 158l29 29-19 92h-34z" fill="#3a3a3a"/>
                    <path d="M213 158l111-37 28 29-110 37z" fill="#545454"/>
                    <path d="M242 187l110-37 123 129H223z" fill="#434343"/>
                    <path d="M324 121L683 0h120L352 150z" fill="#8e8e8e"/>
                    <path d="M352 150L800 0l-58 279H475z" fill="#7c7c7c"/>
                    <path d="M800 0h38l-35 162-24 117h-37z" fill="#858585"/>
                    <path d="M838 0h34l-50 166-19-4z" fill="#7c7c7c"/>
                    <path d="M803 162l19 4-23 113h-20z" fill="#000"/>
                    <path d="M690 38l89-30 35 36-90 30z" fill="#e4e4e4"/>
                    <path d="M690 38l34 36-2 19-36-37z" fill="#989898"/>
                    <path d="M724 74l90-30-3 19-89 30z" fill="#b1b1b1"/>
                    <path d="M331 158l91-30 34 36-89 30z" fill="#e4e4e4"/>
                    <path d="M331 158l36 36-4 19-35-36z" fill="#989898"/>
                    <path d="M367 194l89-30-3 19-90 30z" fill="#b1b1b1"/>
                    <path d="M203 50l81 85M176 146l33 34M170 275l21-7M176 270l10 9" stroke="#7c0000" fill="none"/>
                    <path d="M176 159l140-46" stroke="#f00"/>
                    <g fill="none" stroke="#877c7a">
                        <path d="M514 129l9-45 8 8M544 119l9-45 41 43-1 9M574 109l9-45 40 42 1 9"/>
                    </g>
                    <g fill="none" stroke="#b9b9b9">
                        <circle cx="587" cy="140" r="124"/>
                        <circle cx="587" cy="16" r="8"/><circle cx="587" cy="264" r="8"/><circle cx="463" cy="140" r="8"/><circle cx="711" cy="140" r="8"/>
                        <path d="M579 16h16M579 264h16M463 132v16M711 132v16"/>
                    </g>
                    <path d="M531 91l69-23 35 36-70 23zM527 110l70-23 34 36-68 23zM531 91l-4 19M600 68l-3 19M635 104l-4 19M565 127l-2 19" fill="none" stroke="#fff" stroke-width="1.500"/>
                </svg>
                <section class="float-panel">
                    <h2>钢筋显示控制面板</h2>
                    <div class="checks">
                        <label><input type="checkbox" checked>水平纵筋</label>
                        <label><input type="checkbox" checked>横向钢筋</label>
                        <label><input type="checkbox" checked>显示其它图元</label>
                        <label><input type="checkbox" checked>显示详细公式</label>
                    </div>
                </section>
            </div>

            <!-- Snap toolbar -->
            <div class="toolrow snap-row">
                <div class="strip"><span class="grip"></span>
                    <button class="tool"><svg class="ico"><use href="#i-ortho"/></svg>正交</button>
                    <button class="tool on"><svg class="ico"><use href="#i-snap"/></svg>对象捕捉</button>
                    <button class="tool on"><svg class="ico"><use href="#i-dyn"/></svg>动态输入</button>
                </div>
                <div class="strip"><span class="grip"></span>
                    <button class="tool"><svg class="ico"><use href="#i-cross"/></svg>交点</button>
                    <button class="tool on"><svg class="ico"><use href="#i-perp"/></svg>垂点</button>
                    <button class="tool on"><svg class="ico"><use href="#i-mid"/></svg>中点</button>
                    <button class="tool"><svg class="ico"><use href="#i-vertex"/></svg>顶点</button>
                    <button class="tool"><svg class="ico"><use href="#i-coord"/></svg>坐标</button>
                </div>
                <div class="strip offsets"><span class="grip"></span>
                    <span class="combo narrow"><select aria-label="偏移方式"><option>不偏移</option></select></span><span class="sep"></span>
                    <label for="off-x">X=</label><span class="spin"><input id="off-x" type="text" value="0"><svg viewBox="0 0 8 16"><path d="M0 4l4-4 4 4zM0 12l4 4 4-4z" fill="#555"/></svg></span><span class="unit">mm</span>
                    <label for="off-y">Y=</label><span class="spin"><input id="off-y" type="text" value="0"><svg viewBox="0 0 8 16"><path d="M0 4l4-4 4 4zM0 12l4 4 4-4z" fill="#555"/></svg></span><span class="unit">mm</span><span class="sep slim"></span>
                    <input id="rot-on" class="rot-on" type="checkbox"><label class="rot-label" for="rot-on">旋转</label>
                    <span class="spin wide"><input aria-label="旋转角度" type="text" value="0.000"><svg viewBox="0 0 8 16"><path d="M0 4l4-4 4 4zM0 12l4 4 4-4z" fill="#555"/></svg></span><span class="unit">°</span>
                </div>
            </div>

            <!-- Rebar editor -->
            <section class="dock">
                <div class="dock-grip"><button aria-label="关闭"><svg viewBox="0 0 10 10"><path d="M1 1l8 8M9 1L1 9" stroke="#222" stroke-width="2"/></svg></button><span></span></div>
                <div class="dock-body">
                    <div class="toolrow dock-tools">
                        <button class="nav-btn" aria-label="首条"><svg class="ico"><use href="#i-first"/></svg></button>
                        <button class="nav-btn" aria-label="上一条"><svg class="ico"><use href="#i-prev"/></svg></button>
                        <button class="nav-btn" aria-label="下一条"><svg class="ico"><use href="#i-next"/></svg></button>
                        <button class="nav-btn" aria-label="末条"><svg class="ico"><use href="#i-last"/></svg></button><span class="sep slim"></span>
                        <button class="nav-btn" aria-label="上移"><svg class="ico"><use href="#i-up"/></svg></button>
                        <button class="nav-btn" aria-label="下移"><svg class="ico"><use href="#i-down"/></svg></button><span class="sep slim"></span>
                        <button class="tool off"><svg class="ico"><use href="#i-insert"/></svg>插入</button>
                        <button class="tool off"><svg class="ico"><use href="#i-remove"/></svg>删除</button>
                        <button class="tool off"><svg class="ico"><use href="#i-scale"/></svg>缩尺配筋</button>
                        <button class="tool"><svg class="ico"><use href="#i-info"/></svg>钢筋信息</button>
                        <button class="tool"><svg class="ico"><use href="#i-lib"/></svg>钢筋图库</button>
                        <button class="tool"><svg class="ico"><use href="#i-other"/></svg>其他</button><button class="drop" aria-label="其他"></button>
                        <button class="tool">关闭</button><span class="sep"></span>
                        <span class="total">单构件钢筋总重(kg)：0.971</span>
                    </div>
                    <div class="grid-box">
                        <table>
                            <colgroup><col class="w-no"><col class="w-name"><col class="w-dia"><col class="w-lv"><col class="w-fig"><col class="w-shape"><col class="w-formula"><col class="w-desc"><col class="w-len"><col class="w-count"><col class="w-lap"><col class="w-loss"><col class="w-unit"></colgroup>
                            <thead>
                                <tr><th></th><th class="picked">筋号</th><th>直径<span class="en">(mm)</span></th><th>级别</th><th>图号</th><th>图形</th><th>计算公式</th><th>公式描述</th><th>长度<span class="en">(mm)</span></th><th>根数</th><th>搭接</th><th>损耗<span class="en">(%)</span></th><th>单重<span class="en">(kg)</span></th></tr>
                            </thead>
                            <tbody>
                                <tr class="tall green">
                                    <th class="current"><b class="en">1*</b></th><td class="name active">横向钢筋<span class="en">.1</span></td><td><span class="en">8</span></td><td class="mid"><svg class="rebar"><use href="#i-rebar"/></svg></td><td><span class="en">0</span></td>
                                    <td class="shape"><svg viewBox="0 0 200 60"><path d="M71 57V8h61" fill="none" stroke="#000" stroke-width="2"/><path d="M131 8v9" stroke="#000" stroke-width="2"/><text x="86" y="15">76</text><text x="116" y="15">225</text><text transform="translate(56 9) rotate(90)">244</text><text transform="translate(145 14) rotate(-90)">60</text></svg></td>
                                    <td><span class="en">275+40*d</span></td><td>净长<span class="en">+</span>端头</td><td><span class="en">595</span></td><td><span class="en">3</span></td><td><span class="en">0</span></td><td><span class="en">0</span></td><td><span class="en">0.235</span></td>
                                </tr>
                                <tr class="medium green">
                                    <th><span class="en">2</span></th><td class="name">水平纵筋<span class="en">.1</span></td><td><span class="en">12</span></td><td class="mid"><svg class="rebar"><use href="#i-rebar"/></svg></td><td><span class="en">1</span></td>
                                    <td class="shape"><svg viewBox="0 0 200 28"><path d="M23 18h150" stroke="#000" stroke-width="2"/><text class="red" x="89" y="15">300</text></svg></td>
                                    <td><span class="en">300</span></td><td>净长</td><td><span class="en">300</span></td><td><span class="en">1</span></td><td><span class="en">0</span></td><td><span class="en">0</span></td><td><span class="en">0.266</span></td>
                                </tr>
                                <tr>
                                    <th><span class="en">3</span></th><td class="name"></td><td></td><td></td><td></td><td></td><td></td><td></td><td></td><td></td><td></td><td></td><td></td>
                                </tr>
                            </tbody>
                        </table>
                        <div class="hscroll"><svg viewBox="0 0 6 9"><path d="M5 1L1 4.500 5 8" fill="none" stroke="#555" stroke-width="2"/></svg><span class="htrack"><span class="hthumb"></span></span><svg viewBox="0 0 6 9"><path d="M1 1l4 3.500L1 8" fill="none" stroke="#555" stroke-width="2"/></svg></div>
                    </div>
                </div>
            </section>
        </main>
    </div>

    <!-- Status bar -->
    <footer class="status">
        <span class="s-pos"><span class="en">X=21940 Y=6904</span></span>
        <span class="s-height">层高<span class="en">:2.8m</span></span>
        <span class="s-base">底标高<span class="en">:13.07m</span></span>
        <span class="s-count"><span class="en">1(3)</span></span>
        <span class="s-rest"></span>
    </footer>

    <!-- Input method bar -->
    <div class="ime">
        <svg class="ime-logo"><use href="#i-sogou"/></svg>
        <b>中</b>
        <svg viewBox="0 0 16 16"><circle cx="5" cy="6" r="2" fill="none" stroke="#1b74cc" stroke-width="1.500"/><path d="M11 8h3c0 3-1 4-3 5" fill="#1b74cc"/></svg>
        <svg viewBox="0 0 16 16"><rect x="5" y="0" width="6" height="10" rx="3" fill="#1b74cc"/><path d="M3 7c0 6 10 6 10 0M8 12v4" fill="none" stroke="#1b74cc" stroke-width="1.500"/></svg>
        <svg viewBox="0 0 16 16"><rect x="0" y="2" width="16" height="12" rx="1" fill="#1b74cc"/><path d="M2 5h12M2 8h12" stroke="#fff" stroke-width="1.500" stroke-dasharray="2 1"/><path d="M4 11.500h8" stroke="#fff"/></svg>
        <svg viewBox="0 0 16 16"><circle cx="5" cy="3.500" r="3" fill="#b7c3d3"/><path d="M0 14V8h10v6z" fill="#b7c3d3"/><text x="6" y="15" class="ime-num">17</text></svg>
        <svg viewBox="0 0 16 16"><path d="M5 1h6l5 3-2 4-2-1v8H4V7L2 8 0 4z" fill="#1b74cc"/></svg>
        <svg viewBox="0 0 16 16"><path d="M2 14l8-8" stroke="#1b74cc" stroke-width="3"/><path d="M15 3l-3 3-2-2 3-3c-3-1-6 2-5 5l2 2c4 0 6-2 5-5z" fill="#1b74cc"/></svg>
    </div>

    <!-- Taskbar -->
    <div class="taskbar">
        <button class="start" aria-label="开始"><svg viewBox="0 0 16 16"><path d="M0 2.300L7 1.300v6.200H0zM8 1.200L16 0v7.500H8zM0 8.500h7v6.200l-7-1zM8 8.500h8V16l-8-1.200z" fill="#fff"/></svg></button>
        <div class="search"><span class="cortana"></span><input type="text" aria-label="搜索" placeholder="在这里输入你要搜索的内容"><svg viewBox="0 0 12 18"><rect x="3.500" y=".5" width="5" height="11" fill="none" stroke="#999"/><path d="M.5 8v6.500h11V8M6 15v3M3 17.500h6" fill="none" stroke="#999"/></svg></div>
        <div class="apps">
            <button aria-label="应用"><svg viewBox="0 0 24 24"><g fill="#e8e8e8"><path d="M11 11V3a6 6 0 0 0-8 6c2 2 5 3 8 2z"/><path d="M13 11h8a6 6 0 0 0-6-9c-2 3-3 6-2 9z"/><path d="M13 13v8a6 6 0 0 0 9-6c-3-2-6-3-9-2z"/><path d="M11 13H2a6 6 0 0 0 7 9c2-3 3-6 2-9z"/></g></svg></button>
            <button aria-label="应用"><svg viewBox="0 0 24 24"><path d="M21 4c-7-2-16 0-17 8 0 6 6 10 11 8 5-2 6-7 2-9-3-1-6 1-5 4M4 9C7 4 13 4 17 6M12 15c2 1 4 0 4-2" fill="none" stroke="#ccc" stroke-width="1.500"/></svg></button>
            <button aria-label="Edge"><svg viewBox="0 0 24 24"><path d="M2 11C3 4 8 1 13 1c6 0 9 5 9 12H8c0 6 7 7 12 4v4C12 25 3 22 3 15c0-4 3-6 6-7-1 1-1 2-1 3h7C15 5 7 5 2 11z" fill="#1b83dd"/></svg></button>
            <button aria-label="应用商店"><svg viewBox="0 0 24 24"><path d="M2 7l20-1v15L2 23z" fill="#fff"/><path d="M7 7c0-6 8-6 9 0" fill="none" stroke="#fff" stroke-width="1.500"/><path d="M7 11h4v3H7zM12 10.500h5V14h-5zM7 15h4v4H7zM12 15h5v4.500h-5z" fill="#04080a"/></svg></button>
            <button aria-label="资源管理器"><svg viewBox="0 0 24 24"><path d="M2 3h8l2 3h10v14H2z" fill="#f9d977"/><path d="M5 13h14v8h-4v-4H9v4H5z" fill="#36a0da"/></svg></button>
            <button class="run" aria-label="广联达"><svg viewBox="0 0 24 24"><path d="M22 1c-4 1-4 3-7 4-4 1-7 4-6 8s6 5 8 2c1-2 0-3-2-4 4-2 8 0 8 4 0 5-5 9-11 8C5 22 1 17 2 11 3 4 11-1 22 1z" fill="#2594c9"/><path d="M3 7l15 12-4 4L3 13z" fill="#e0444e"/></svg></button>
            <button class="run" aria-label="广联达"><svg viewBox="0 0 24 24"><path d="M22 1c-4 1-4 3-7 4-4 1-7 4-6 8s6 5 8 2c1-2 0-3-2-4 4-2 8 0 8 4 0 5-5 9-11 8C5 22 1 17 2 11 3 4 11-1 22 1z" fill="#1a8fe0"/></svg></button>
            <button class="run current" aria-label="钢筋算量"><svg viewBox="0 0 24 24"><rect width="24" height="24" rx="5" fill="#0b93f6"/><path d="M15 6c-3-2-5 0-5 3v6c0 4 4 4 6 2M4 12h15c0 3-1 5-4 5M4 12c0 3 1 5 4 5" fill="none" stroke="#fff" stroke-width="1.800"/></svg></button>
            <button class="run" aria-label="记事"><svg viewBox="0 0 24 24"><rect width="24" height="24" rx="2" fill="#f59b1e"/><path d="M4 4h14v16H4z" fill="#fff6df"/><path d="M6 8h9M6 12h7M6 16h8" stroke="#8a6a3a"/><path d="M11 16L20 3l2 2-8 12z" fill="#c2361c"/></svg></button>
            <button class="run" aria-label="浏览器"><svg viewBox="0 0 24 24"><circle cx="12" cy="12" r="10" fill="#55bd36"/><path d="M7 12h10c0-6-10-6-10 0 0 5 6 6 9 3" fill="none" stroke="#fff" stroke-width="2.500"/><path d="M1 17C4 6 14 0 22 4" fill="none" stroke="#c9ecb9" stroke-width="1.500"/></svg></button>
            <button class="run" aria-label="帮助"><svg viewBox="0 0 24 24"><path d="M3 8h9v14H3z" fill="#e8e8e8"/><path d="M5 11h5M5 14h5M5 17h5M5 20h5" stroke="#555"/><path d="M11 5c0-5 9-4 8 1-1 3-4 3-4 7M15 15v3" fill="none" stroke="#f4e71b" stroke-width="3"/></svg></button>
        </div>
        <div class="cpu"><span>27%</span><span>CPU使用</span></div>
        <div class="tray">
            <svg viewBox="0 0 16 16"><path d="M3 11l5-6 5 6" fill="none" stroke="#fff" stroke-width="1.300"/></svg>
            <svg viewBox="0 0 16 16"><path d="M5 5.500h10v7H5zM1 3.500h5v4H1zM3.500 8v5M2 1v2M5 1v2" fill="none" stroke="#fff"/><path d="M7 7h6v4H7z" fill="#fff"/></svg>
            <svg viewBox="0 0 16 16"><path d="M2 14C3 8 7 4 14 3M6 14c1-4 4-6 8-7M9 14c1-2 2-3 5-3.500" fill="none" stroke="#bbb" stroke-width="1.200"/><circle cx="12.500" cy="13.500" r="1" fill="#fff"/></svg>
            <svg viewBox="0 0 16 16"><path d="M1 6h3l3-3v10l-3-3H1zM9 6c1 1 1 3 0 4M11 4c2 2 2 6 0 8M13 2.500c3 3 3 8 0 11" fill="none" stroke="#ddd"/></svg>
            <span>英</span>
            <svg viewBox="0 0 28 28"><use href="#i-sogou"/></svg>
        </div>
        <div class="clock"><span>16:37</span><span>2017/8/27</span></div>
        <button class="notice" aria-label="通知"><svg viewBox="0 0 26 24"><path d="M1 2h16v12H9l-3 3v-3H1z" fill="#fff"/><path d="M4 5.500h10M4 8.500h10M4 11.500h6" stroke="#000"/><circle cx="17" cy="15" r="8" fill="#2b2b2b" stroke="#777"/><text x="14" y="20">8</text></svg></button>
    </div>
</body>
</html>
```
FILE: styles.css
```css
* {
    box-sizing: border-box;
}
body {
    margin: 0;
    height: 100vh;
    display: flex;
    flex-direction: column;
    overflow: hidden;
    background: #f0f0f0;
    color: #000;
    font: 12px/16px "Open Sans", "Noto Sans CJK SC", sans-serif;
}
button {
    margin: 0;
    padding: 0;
    border: 0;
    background: none;
    color: inherit;
    font: inherit;
    white-space: nowrap;
}
.sprite {
    display: none;
}
svg {
    display: block;
}
.ico {
    width: 16px;
    height: 16px;
    flex: none;
}
.en {
    font-family: "DejaVu Sans Mono", monospace;
    font-size: 10px;
    line-height: 12px;
}

/* title bar */
.titlebar {
    display: flex;
    align-items: center;
    height: 23px;
    flex: none;
    padding-left: 2px;
    background: #fff;
}
.title {
    flex: 1;
    margin-left: 5px;
    white-space: nowrap;
}
.winbtns {
    display: flex;
}
.winbtns button {
    width: 46px;
    height: 23px;
    display: flex;
    align-items: center;
    justify-content: center;
}
.winbtns svg {
    width: 12px;
    height: 12px;
}
.speedball {
    position: absolute;
    top: -28px;
    left: 399px;
    width: 46px;
    height: 46px;
    border-radius: 50%;
    border: 2px solid #c9d8cb;
    background: linear-gradient(#2f9e48, #45c163);
    box-shadow: 0 2px 4px rgba(0, 0, 0, 0.4);
    color: #fff;
    font-weight: bold;
    text-align: center;
    padding-top: 25px;
}

/* menu bar */
.menubar {
    display: flex;
    align-items: center;
    height: 29px;
    flex: none;
    padding-left: 5px;
}
.menus {
    display: flex;
    gap: 12px;
    width: 778px;
}
.tip {
    flex: none;
    width: 188px;
    margin-left: 5px;
    padding-left: 31px;
    line-height: 27px;
    background: linear-gradient(#fafafa, #f3f3f3);
    color: #2f6b00;
    text-decoration: none;
}
.account {
    flex: 1;
    display: flex;
    align-items: center;
    height: 27px;
    margin-left: 2px;
    background: linear-gradient(#fafafa, #f3f3f3);
}
.beans {
    margin: 0 8px 0 4px;
}
.more {
    margin-left: auto;
    padding: 0 4px;
    align-self: flex-start;
    font-size: 16px;
    line-height: 12px;
}

/* toolbars */
.toolrow {
    display: flex;
    align-items: center;
    height: 28px;
    flex: none;
}
.main-tools {
    gap: 2px;
    height: 31px;
}
.strip {
    display: flex;
    align-items: center;
    height: 27px;
    border-radius: 3px;
    background: linear-gradient(#fbfbfb, #f2f2f2);
}
.tool {
    display: flex;
    align-items: center;
    gap: 4px;
    height: 23px;
    padding: 0 2px 0 3px;
    border: 1px solid transparent;
}
.tool.off {
    color: #8b8b8b;
}
.tool.on {
    border-color: #0078d7;
    background: #dfebf6;
}
.tool.on.deep {
    background: #b3d7f3;
}
.drop {
    width: 13px;
    height: 23px;
    display: flex;
    align-items: center;
    justify-content: center;
}
.axis-tools .drop {
    width: 12px;
}
.drop.small {
    width: 9px;
}
.drop::after {
    content: "";
    border: 3px solid transparent;
    border-top-color: #000;
    border-bottom-width: 0;
}
.drop.off::after {
    border-top-color: #777;
}
.sep {
    width: 6px;
    height: 18px;
    background: linear-gradient(#c0c0c0, #c0c0c0) 3px 0 / 1px 100% no-repeat;
}
.sep.slim {
    width: 4px;
}
.grip {
    width: 7px;
    height: 14px;
    background: repeating-linear-gradient(#b8b8b8 0 2px, transparent 2px 4px) 4px 0 / 2px 100% no-repeat;
}
.file-tools {
    width: 151px;
}
.calc-tools {
    width: 549px;
}
.view-tools {
    flex: 1;
}
.combo {
    display: grid;
    width: 72px;
    height: 23px;
}
.combo.narrow {
    width: 60px;
}
.combo.tiny {
    width: 56px;
}
.combo select,
.combo::after {
    grid-area: 1 / 1;
}
.combo select {
    appearance: none;
    width: 100%;
    padding: 0 0 0 3px;
    border: 0;
    background: linear-gradient(90deg, #fff calc(100% - 16px), #f4f4f4 0);
    font: inherit;
    color: inherit;
}
.combo::after {
    content: "";
    place-self: center end;
    margin-right: 5px;
    border: 3px solid transparent;
    border-top-color: #000;
    border-bottom-width: 0;
    pointer-events: none;
}
.component-tools {
    width: 567px;
    margin-right: 74px;
}
.stub {
    width: 30px;
    margin-left: 2px;
}

/* workspace */
.workspace {
    flex: 1;
    min-height: 0;
    display: flex;
    gap: 3px;
}
.sidebar {
    width: 187px;
    flex: none;
    display: flex;
    flex-direction: column;
    padding: 1px 1px 2px 1px;
    font-family: "Noto Sans CJK SC", sans-serif;
}
.side-title {
    display: flex;
    align-items: center;
    gap: 8px;
    height: 15px;
    margin-bottom: 1px;
    padding-right: 4px;
    background: #0055e5;
    color: #fff;
    font-size: 13px;
}
.side-title span {
    flex: 1;
}
.side-title svg {
    width: 10px;
    height: 10px;
}
.module {
    height: 22px;
    flex: none;
    margin: 0 0 0 1px;
    border: 1px solid #a0a0a0;
    background: #f0f0f0;
}
.module + .module {
    border-top: 0;
}
.tree-box {
    flex: 1;
    min-height: 0;
    display: flex;
    flex-direction: column;
    margin: 1px 0 1px 2px;
    border: 1px solid #a0a0a0;
}
.tree-tools {
    flex: none;
    height: 26px;
    padding: 5px 4px;
    background: linear-gradient(#fff, #eee);
}
.tree-tools svg {
    width: 40px;
    height: 16px;
}
.tree-view {
    flex: 1;
    min-height: 0;
    display: flex;
    border-top: 1px solid #828790;
    background: #fff;
    overflow: hidden;
}
.tree,
.leaves {
    margin: 0;
    padding: 0;
    list-style: none;
}
.tree {
    flex: 1;
    min-width: 0;
    overflow: hidden;
    padding-top: 1px;
}
.branch,
.leaves li {
    display: flex;
    align-items: center;
    height: 16px;
    white-space: nowrap;
}
.branch .ico {
    margin-right: 5px;
}
.branch i {
    width: 17px;
    height: 16px;
    margin: 0 2px 0 4px;
    display: flex;
    align-items: center;
    justify-content: center;
}
.branch i::after {
    content: "";
    width: 6px;
    height: 6px;
    border: solid #444;
    border-width: 0 2px 2px 0;
}
.branch i:not(.open):not(.shut)::after {
    border: 0;
}
.branch .open::after {
    transform: translateY(-2px) rotate(45deg);
}
.branch .shut::after {
    border-color: #aaa;
    transform: translateX(-2px) rotate(-45deg);
}
.leaves {
    background:
        repeating-linear-gradient(#888 0 1px, transparent 1px 2px) 12px 0 / 1px 100% no-repeat,
        repeating-linear-gradient(#888 0 1px, transparent 1px 2px) 31px 0 / 1px calc(100% - 8px) no-repeat;
}
.leaves li {
    padding-left: 31px;
}
.leaves li::before {
    content: "";
    width: 11px;
    height: 1px;
    flex: none;
    background: repeating-linear-gradient(90deg, #888 0 1px, transparent 1px 2px);
}
.leaves .ico {
    margin: 0 4px 0 1px;
}
.leaves .picked {
    background: linear-gradient(#d9d9d9, #d9d9d9) 42px 0 / 85px 16px no-repeat;
}
.tree .tail {
    margin: 0 1px 0 0;
}
.new {
    align-self: flex-start;
    background: #ffe000;
    font: bold 9px/10px "DejaVu Sans", sans-serif;
}
.vscroll {
    display: flex;
    flex-direction: column;
    align-items: center;
    justify-content: space-between;
    width: 16px;
    padding: 6px 0 6px;
    margin-right: 1px;
    background: #f0f0f0;
}
.vscroll svg {
    width: 9px;
    height: 6px;
}
.vthumb {
    width: 100%;
    height: 60%;
    margin-top: 144px;
    background: #cdcdcd;
}
.stage {
    flex: 1;
    min-width: 0;
    display: flex;
    flex-direction: column;
}

/* 3D view */
.viewport {
    flex: 1;
    min-height: 0;
    margin: 1px 1px 0 0;
    position: relative;
    overflow: hidden;
    background: #727272;
}
.scene {
    width: 100%;
    height: 100%;
}
.float-panel {
    position: absolute;
    top: 3px;
    left: 10px;
    width: 166px;
    height: 269px;
    display: flex;
    flex-direction: column;
    background: #fff;
    border: 1px solid #888;
    box-shadow: 2px 2px 8px rgba(0, 0, 0, 0.5);
}
.float-panel h2 {
    margin: 0;
    padding: 0 7px;
    font-size: 12px;
    font-weight: normal;
    line-height: 30px;
    color: #999;
}
.checks {
    flex: 1;
    margin: 0 1px 1px;
    padding: 2px 3px;
    border: 1px solid #828790;
    font-family: "Noto Sans CJK SC", sans-serif;
}
.checks label {
    display: flex;
    align-items: center;
    gap: 3px;
    height: 12px;
    line-height: 12px;
}
.checks input,
.rot-on {
    appearance: none;
    width: 11px;
    height: 11px;
    margin: 0;
    border: 1px solid #777;
    background: #fff;
    display: grid;
    place-content: center;
}
.checks input:checked::after {
    content: "";
    width: 7px;
    height: 4px;
    border: solid #333;
    border-width: 0 0 1px 1px;
    transform: rotate(-45deg) translateY(-1px);
}

/* snap toolbar */
.snap-row {
    gap: 3px;
}
.offsets {
    color: #777;
}
.offsets .combo,
.rot-label {
    color: #000;
}
.spin {
    display: flex;
    align-items: center;
    width: 58px;
    height: 23px;
    margin: 0 2px 0 4px;
    border: 1px solid #777;
    background: #f7f7f7;
}
.spin.wide {
    width: 68px;
}
.spin input {
    flex: 1;
    min-width: 0;
    padding: 0 10px 0 0;
    border: 0;
    background: none;
    color: #8b8b8b;
    font: inherit;
    text-align: right;
}
.spin svg {
    width: 6px;
    height: 15px;
    margin-right: 3px;
}
.unit {
    margin-right: 5px;
}
.rot-label {
    margin: 0 2px 0 8px;
}

/* rebar editor */
.dock {
    display: flex;
    flex: none;
    height: 232px;
    padding: 5px 2px 0 0;
}
.dock-grip {
    width: 12px;
    display: flex;
    flex-direction: column;
}
.dock-grip button {
    width: 11px;
    height: 11px;
    margin-top: 1px;
    border: 1px solid #555;
    background: #e8b6ae;
}
.dock-grip span {
    flex: 1;
    margin: 2px 2px 3px;
    background: radial-gradient(circle at 2px 2px, #b4b4b4 1px, transparent 1px) 0 0 / 4px 5px;
}
.dock-body {
    flex: 1;
    min-width: 0;
    display: flex;
    flex-direction: column;
}
.dock-tools {
    height: 27px;
    background: linear-gradient(#fcfcfc, #f0f0f0);
}
.nav-btn {
    width: 24px;
    height: 23px;
    display: flex;
    align-items: center;
    justify-content: center;
}
.total {
    margin-left: 3px;
    white-space: nowrap;
}
.grid-box {
    flex: 1;
    min-height: 0;
    display: flex;
    flex-direction: column;
    justify-content: space-between;
    overflow: hidden;
    margin-bottom: 1px;
    border: 1px solid #a0a0a0;
    background: #fff;
    font-family: "Noto Sans CJK SC", sans-serif;
}
table {
    flex: none;
    width: 1189px;
    table-layout: fixed;
    border-collapse: collapse;
}
.w-no { width: 33px; }
.w-name { width: 73px; }
.w-dia { width: 56px; }
.w-lv { width: 36px; }
.w-fig { width: 33px; }
.w-shape { width: 201px; }
.w-formula { width: 166px; }
.w-desc { width: 156px; }
.w-len { width: 61px; }
.w-count { width: 226px; }
.w-lap { width: 39px; }
.w-loss { width: 49px; }
.w-unit { width: 60px; }
th,
td {
    height: 19px;
    padding: 0 2px;
    border-right: 1px solid #b8b8b8;
    border-bottom: 1px solid #b8b8b8;
    font-weight: normal;
    line-height: 18px;
    text-align: left;
    white-space: nowrap;
    overflow: hidden;
}
thead th,
tbody th {
    text-align: center;
    padding: 0;
    background: linear-gradient(#fff, #f0f0f0);
}
thead th.picked {
    background: linear-gradient(#f8d9a0, #f1bd5f);
    color: #5a0050;
}
.tall td,
.tall th {
    height: 61px;
}
.medium td,
.medium th {
    height: 29px;
}
.green td {
    background: #ccffd9;
}
.tall .current {
    background: #ffd48c;
    color: #5a0050;
}
tbody .name {
    border-right-color: #000;
}
tbody .active {
    background: #aeead9;
}
td.mid {
    text-align: center;
}
.rebar {
    width: 12px;
    height: 12px;
    margin: 0 auto;
}
td.shape {
    padding: 0;
}
.shape svg {
    width: 200px;
}
.shape text {
    font: 10px "DejaVu Sans Mono", monospace;
}
.shape .red {
    fill: #f00;
}
.hscroll {
    display: flex;
    align-items: center;
    gap: 6px;
    height: 17px;
    flex: none;
    padding: 0 6px;
    border-bottom: 1px solid #fff;
    background: #f0f0f0;
}
.hscroll svg {
    width: 6px;
    height: 9px;
}
.htrack {
    flex: 1;
}
.hthumb {
    display: block;
    width: 55%;
    height: 15px;
    background: #cdcdcd;
}

/* status bar */
.status {
    display: flex;
    gap: 3px;
    height: 21px;
    flex: none;
    background: #fff;
    font-family: "Noto Sans CJK SC", sans-serif;
}
.status > span {
    padding: 0 1px;
    border: 1px solid #d5d5d5;
    background: linear-gradient(#fff, #f0f0f0);
    line-height: 19px;
    white-space: nowrap;
}
.s-pos { width: 147px; }
.s-height { width: 77px; }
.s-base { width: 97px; }
.s-count { width: 47px; }
.s-rest { flex: 1; }

/* input method */
.ime {
    position: absolute;
    right: 0;
    bottom: 40px;
    display: flex;
    align-items: center;
    gap: 6px;
    height: 24px;
    padding-right: 4px;
    border: 1px solid #c5d8ea;
    border-right: 0;
    background: #fff;
    color: #1b74cc;
}
.ime svg {
    width: 16px;
    height: 16px;
    overflow: visible;
}
.ime .ime-logo {
    width: 28px;
    height: 28px;
    margin-left: -24px;
}
.ime b {
    font-size: 16px;
    line-height: 16px;
}
.ime-num {
    font: bold 9px "Liberation Sans", sans-serif;
    fill: #8fa3bb;
}

/* taskbar */
.taskbar {
    display: flex;
    align-items: center;
    height: 40px;
    flex: none;
    background: #02090b;
    color: #fff;
}
.start {
    width: 48px;
    height: 40px;
    padding: 12px 16px;
    background: #000;
}
.start svg {
    width: 16px;
    height: 16px;
}
.search {
    display: flex;
    align-items: center;
    gap: 6px;
    width: 344px;
    height: 40px;
    padding: 0 14px 0 9px;
    background: #333;
}
.cortana {
    width: 21px;
    height: 21px;
    border: 3px solid #fff;
    border-radius: 50%;
}
.search input {
    flex: 1;
    min-width: 0;
    padding: 0;
    border: 0;
    background: none;
    color: #999;
    font: inherit;
    font-size: 14px;
}
.search input::placeholder {
    color: #999;
}
.search svg {
    width: 12px;
    height: 18px;
}
.apps {
    display: flex;
    align-items: center;
    gap: 2px;
    padding-left: 6px;
}
.apps button {
    width: 47px;
    height: 40px;
    display: flex;
    align-items: center;
    justify-content: center;
}
.apps svg {
    width: 24px;
    height: 24px;
}
.apps .run {
    background: linear-gradient(#76b9ed, #76b9ed) 50% 100% / 40px 3px no-repeat;
}
.apps .current {
    background: #3d4548;
    box-shadow: inset 0 -3px #76b9ed;
}
.cpu,
.clock {
    display: flex;
    flex-direction: column;
    align-items: center;
    line-height: 18px;
    white-space: nowrap;
}
.cpu {
    margin-left: auto;
    margin-right: 19px;
}
.tray {
    display: flex;
    align-items: center;
    gap: 9px;
    margin-right: 18px;
}
.tray svg {
    width: 16px;
    height: 16px;
}
.notice {
    margin: 0 14px 0 21px;
}
.notice svg {
    width: 26px;
    height: 24px;
}
.notice text {
    fill: #fff;
    font: bold 12px "Open Sans", sans-serif;
}
```
